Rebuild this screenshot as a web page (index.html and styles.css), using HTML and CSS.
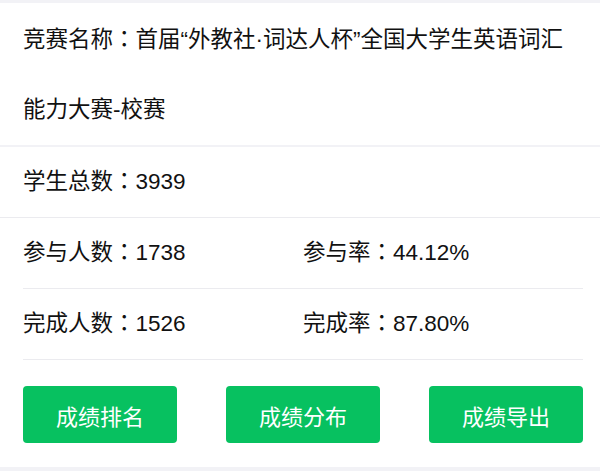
FILE: index.html
```html
<!DOCTYPE html>
<html lang="zh-CN">
<head>
<meta charset="utf-8">
<title>竞赛统计</title>
<link rel="stylesheet" href="styles.css">
</head>
<body>
<div class="page">
  <section class="block title">竞赛名称<span class="colon" lang="zh-Hant">：</span>首届“外教社·词达人杯”全国大学生英语词汇能力大赛-校赛</section>
  <section class="block total">学生总数<span class="colon" lang="zh-Hant">：</span>3939</section>
  <section class="block stats">
    <div class="row">
      <div class="cell">参与人数<span class="colon" lang="zh-Hant">：</span>1738</div>
      <div class="cell">参与率<span class="colon" lang="zh-Hant">：</span>44.12%</div>
    </div>
    <div class="row">
      <div class="cell">完成人数<span class="colon" lang="zh-Hant">：</span>1526</div>
      <div class="cell">完成率<span class="colon" lang="zh-Hant">：</span>87.80%</div>
    </div>
    <div class="actions">
      <button class="btn">成绩排名</button>
      <button class="btn">成绩分布</button>
      <button class="btn">成绩导出</button>
    </div>
  </section>
</div>
</body>
</html>
```
FILE: styles.css
```css
html, body {
  margin: 0;
  padding: 0;
  background: #f2f2f6;
}
.page {
  padding-top: 3px;
  font-family: "Liberation Sans", "Noto Sans CJK SC", sans-serif;
  font-size: 22.5px;
  color: #111;
}
.colon {
  font-family: "Liberation Sans", "Noto Sans CJK TC", sans-serif;
}
.block {
  background: #fff;
  padding: 0 17px 0 23px;
}
.title {
  line-height: 70px;
  padding-top: 2px;
  padding-bottom: 0;
  margin-bottom: 2px;
}
.total {
  line-height: 70px;
  border-bottom: 1px solid #ebebef;
}
.row {
  display: grid;
  grid-template-columns: 1fr 1fr;
  line-height: 70px;
  border-bottom: 1px solid #ebebef;
}
.actions {
  display: flex;
  justify-content: space-between;
  padding: 26px 0 24px;
}
.btn {
  width: 154px;
  height: 57px;
  border: none;
  border-radius: 4px;
  background: #07c160;
  color: #fff;
  font-family: "Liberation Sans", "Noto Sans CJK SC", sans-serif;
  font-size: 22px;
  padding: 0;
}
```
